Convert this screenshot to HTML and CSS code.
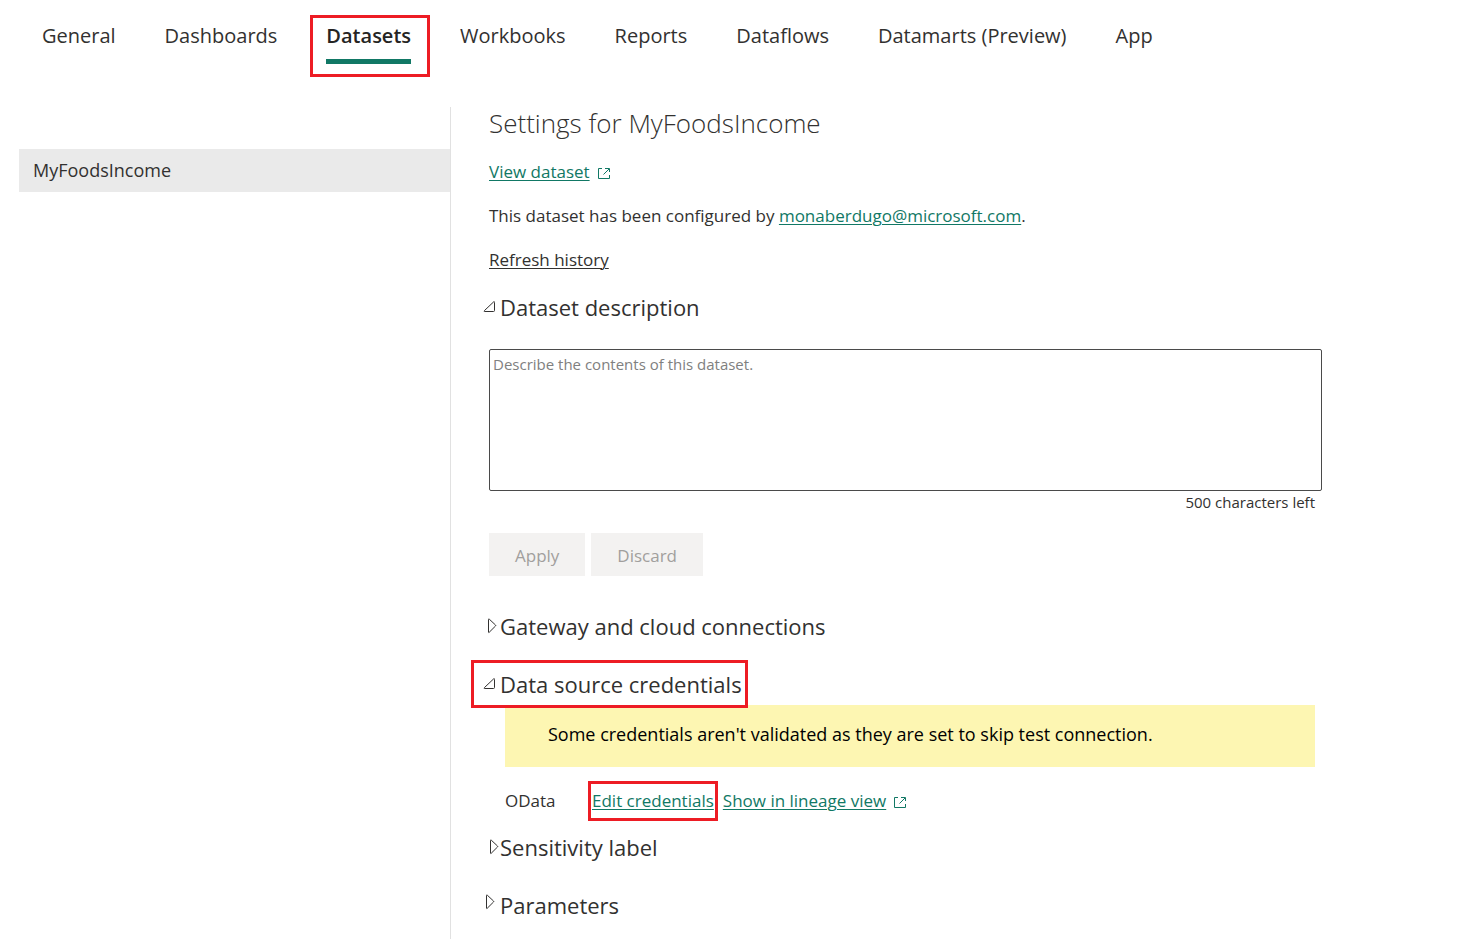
FILE: index.html
```html
<!DOCTYPE html>
<html lang="en">
<head>
<meta charset="utf-8">
<meta name="viewport" content="width=device-width, initial-scale=1">
<title>Settings for MyFoodsIncome</title>
<link rel="stylesheet" href="styles.css">
</head>
<body>
<nav class="tabs" aria-label="Settings sections">
  <a class="tab" href="#general">General</a>
  <a class="tab" href="#dashboards">Dashboards</a>
  <a class="tab tab-active" href="#datasets" aria-current="page">Datasets</a>
  <a class="tab" href="#workbooks">Workbooks</a>
  <a class="tab" href="#reports">Reports</a>
  <a class="tab" href="#dataflows">Dataflows</a>
  <a class="tab" href="#datamarts">Datamarts (Preview)</a>
  <a class="tab" href="#app">App</a>
</nav>
<div class="layout">
  <aside class="sidebar">
    <a class="dataset" href="#myfoodsincome">MyFoodsIncome</a>
  </aside>
  <main class="content">
    <div class="intro">
      <h1 class="title">Settings for MyFoodsIncome</h1>
      <p class="line"><a class="link" href="#dataset">View dataset</a><svg class="external" viewBox="0 0 12 12" aria-hidden="true"><path d="M4 1.500H.5v10h11V8M7 1.500h4.500V5M11 2 5.500 7.500"/></svg></p>
      <p class="line">This dataset has been configured by <a class="link" href="mailto:monaberdugo@microsoft.com">monaberdugo@microsoft.com</a>.</p>
      <p class="line"><a class="link link-plain" href="#history">Refresh history</a></p>
    </div>

    <section class="section section-description">
      <h2 class="heading"><button class="toggle" type="button" aria-expanded="true"><svg class="arrow" viewBox="0 0 17 22" aria-hidden="true"><path d="M1.500 15.500Q.5 15.500 1.500 14.500L10.500 6q1-1 1 .5v8q0 1-1 1Z"/></svg><span>Dataset description</span></button></h2>
      <textarea class="description" aria-label="Dataset description" placeholder="Describe the contents of this dataset."></textarea>
      <p class="count">500 characters left</p>
      <div class="actions">
        <button class="action" type="button" disabled>Apply</button>
        <button class="action" type="button" disabled>Discard</button>
      </div>
    </section>

    <section class="section section-gateway">
      <h2 class="heading"><button class="toggle" type="button" aria-expanded="false"><svg class="arrow" viewBox="0 0 17 22" aria-hidden="true"><path d="M5.500 4.500v12.500q0 1 .8.200l6.200-6.200q.5-.5 0-1L6.300 4.200q-.8-.7-.8.300Z"/></svg><span>Gateway and cloud connections</span></button></h2>
    </section>

    <section class="section section-credentials">
      <h2 class="heading"><button class="toggle marked marked-heading" type="button" aria-expanded="true"><svg class="arrow" viewBox="0 0 17 22" aria-hidden="true"><path d="M1.500 15.500Q.5 15.500 1.500 14.500L10.500 6q1-1 1 .5v8q0 1-1 1Z"/></svg><span>Data source credentials</span></button></h2>
      <p class="warning">Some credentials aren't validated as they are set to skip test connection.</p>
      <div class="source">
        <span class="source-name">OData</span>
        <a class="link marked marked-link" href="#credentials">Edit credentials</a>
        <span><a class="link" href="#lineage">Show in lineage view</a><svg class="external" viewBox="0 0 12 12" aria-hidden="true"><path d="M4 1.500H.5v10h11V8M7 1.500h4.500V5M11 2 5.500 7.500"/></svg></span>
      </div>
    </section>

    <section class="section section-label">
      <h2 class="heading"><button class="toggle" type="button" aria-expanded="false"><svg class="arrow" viewBox="0 0 17 22" aria-hidden="true"><path d="M7.500 4.500v12.500q0 1 .8.200l6.200-6.200q.5-.5 0-1L8.300 4.200q-.8-.7-.8.300Z"/></svg><span>Sensitivity label</span></button></h2>
    </section>

    <section class="section section-parameters">
      <h2 class="heading"><button class="toggle" type="button" aria-expanded="false"><svg class="arrow" viewBox="0 0 17 22" aria-hidden="true"><path d="M3.500 1.500v12.500q0 1 .8.200l6.200-6.200q.5-.5 0-1L4.300 1.200q-.8-.7-.8.300Z"/></svg><span>Parameters</span></button></h2>
    </section>
  </main>
</div>
</body>
</html>
```

FILE: styles.css
```css
* { box-sizing: border-box; }

body {
  margin: 0;
  min-height: 100vh;
  display: flex;
  flex-direction: column;
  background: #fff;
  color: #323130;
  font-family: "Segoe UI", "Open Sans", "Noto Sans", sans-serif;
  font-size: 17px;
  line-height: 24px;
}

h1, h2, p { margin: 0; font-weight: 400; }

button, textarea { font-family: inherit; }

.tabs {
  display: flex;
  gap: 49px;
  height: 107px;
  padding: 20px 42px 0;
}

.tab {
  position: relative;
  height: 44px;
  color: #323130;
  font-size: 20px;
  line-height: 32px;
  text-decoration: none;
  white-space: nowrap;
}

.tab-active {
  border-bottom: 5px solid #117865;
  color: #252423;
  font-weight: 600;
}

.tab-active::after,
.marked::after {
  content: "";
  position: absolute;
  border: 3px solid #ed1c24;
  pointer-events: none;
}

.tab-active::after { inset: -5px -19px -18px -16px; }

.layout {
  flex: 1;
  display: grid;
  grid-template-columns: 451px 1fr;
}

.sidebar {
  padding: 42px 0 0 19px;
  border-right: 1px solid #e1e1e1;
}

.dataset {
  display: block;
  padding: 9px 14px 10px;
  background: #eaeaea;
  color: #323130;
  font-size: 18px;
  text-decoration: none;
}

.content { padding: 1px 144px 17px 38px; }

.intro { display: grid; gap: 20px; }

.title {
  padding-bottom: 2px;
  color: #323130;
  font-size: 26px;
  font-weight: 300;
  line-height: 30px;
}

.link {
  color: #117865;
  text-decoration: underline;
  text-decoration-thickness: 1px;
  text-underline-offset: 2px;
}

.link-plain { color: #323130; }

.external {
  width: 12px;
  height: 12px;
  margin-left: 8px;
  vertical-align: -1px;
  fill: none;
  stroke: #117865;
}

.section-description { margin-top: 20px; }
.section-gateway { margin-top: 35px; }
.section-credentials { margin-top: 26px; }
.section-label { margin-top: 19px; }
.section-parameters { margin-top: 26px; }

.heading {
  display: flex;
  margin-left: -6px;
  padding-bottom: 2px;
}

.toggle {
  position: relative;
  display: flex;
  align-items: center;
  padding: 0;
  border: 0;
  background: none;
  color: #323130;
  font-size: 22px;
  line-height: 30px;
  white-space: nowrap;
}

.arrow {
  width: 17px;
  height: 22px;
  fill: none;
  stroke: #323130;
}

.description {
  display: block;
  width: 100%;
  height: 142px;
  margin-top: 25px;
  padding: 2px 3px;
  border: 1px solid #4a4a4a;
  border-radius: 2px;
  color: #323130;
  font-size: 15px;
  line-height: 24px;
  resize: none;
}

.description::placeholder { color: #808080; }

.count {
  padding: 0 7px 2px 0;
  font-size: 15px;
  line-height: 22px;
  text-align: right;
}

.actions {
  display: flex;
  gap: 6px;
  margin-top: 18px;
}

.action {
  height: 43px;
  padding: 2px 26px 0;
  border: 0;
  background: #f3f2f1;
  color: #a19f9d;
  font-size: 17px;
}

.marked { position: relative; }
.marked-heading::after { inset: -9px -6px -9px -12px; }
.marked-link::after { inset: -8px -4px -8px -4px; }

.warning {
  margin: 4px 7px 0 16px;
  padding: 17px 43px 21px;
  background: #fdf6b2;
  color: #000;
  font-size: 18px;
}

.source {
  display: flex;
  gap: 9px;
  margin: 22px 0 0 16px;
}

.source-name { width: 78px; }
```
